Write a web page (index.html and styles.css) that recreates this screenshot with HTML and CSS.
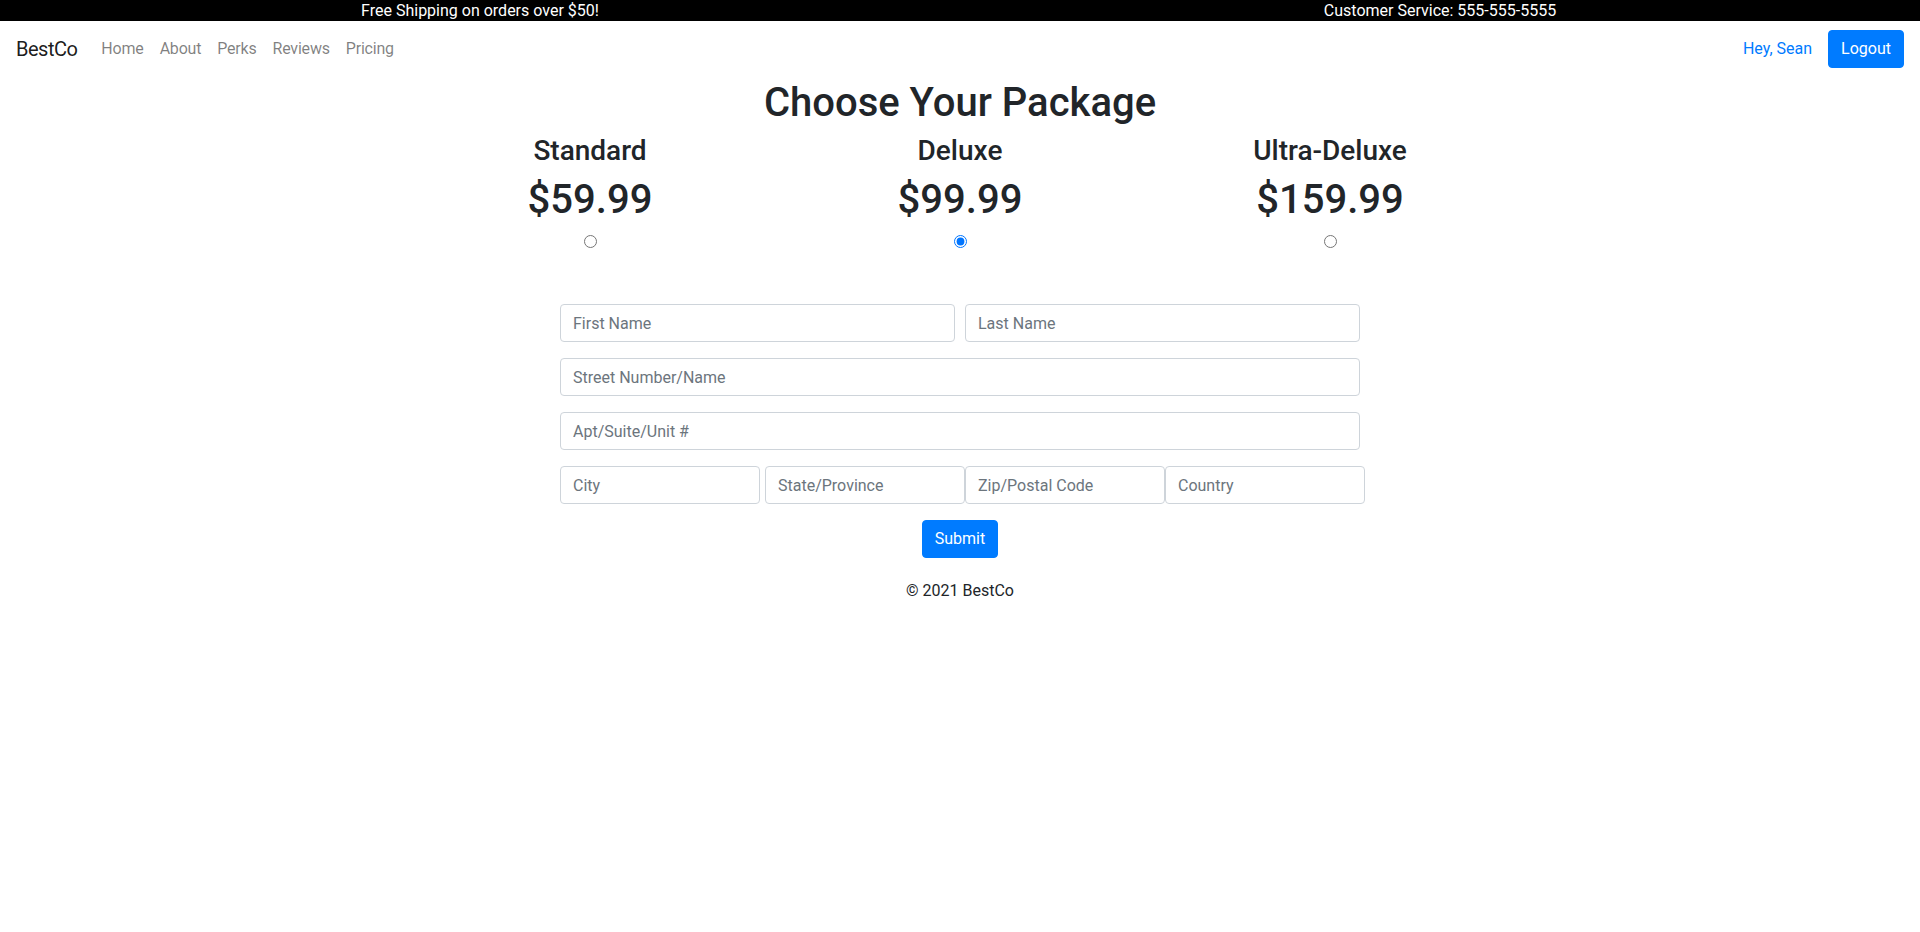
FILE: index.html
```html
<!DOCTYPE html>
<html lang="en">
<head>
<meta charset="utf-8">
<title>BestCo - Choose Your Package</title>
<link rel="stylesheet" href="styles.css">
</head>
<body>
<div class="topbar">
  <div class="topbar-item">Free Shipping on orders over $50!</div>
  <div class="topbar-item">Customer Service: 555-555-5555</div>
</div>
<nav class="navbar">
  <a class="brand" href="#">BestCo</a>
  <ul class="nav-links">
    <li><a class="nav-link" href="#">Home</a></li>
    <li><a class="nav-link" href="#">About</a></li>
    <li><a class="nav-link" href="#">Perks</a></li>
    <li><a class="nav-link" href="#">Reviews</a></li>
    <li><a class="nav-link" href="#">Pricing</a></li>
  </ul>
  <div class="nav-right">
    <a class="user-link" href="#">Hey, Sean</a>
    <button class="btn" type="button">Logout</button>
  </div>
</nav>
<main class="main">
  <h1 class="title">Choose Your Package</h1>
  <div class="packages">
    <label class="package">
      <span class="package-name">Standard</span>
      <span class="package-price">$59.99</span>
      <input class="package-radio" type="radio" name="package" value="standard">
    </label>
    <label class="package">
      <span class="package-name">Deluxe</span>
      <span class="package-price">$99.99</span>
      <input class="package-radio" type="radio" name="package" value="deluxe" checked>
    </label>
    <label class="package">
      <span class="package-name">Ultra-Deluxe</span>
      <span class="package-price">$159.99</span>
      <input class="package-radio" type="radio" name="package" value="ultra">
    </label>
  </div>
  <form class="form">
    <div class="form-row two">
      <input class="field" type="text" placeholder="First Name">
      <input class="field" type="text" placeholder="Last Name">
    </div>
    <div class="form-row">
      <input class="field" type="text" placeholder="Street Number/Name">
    </div>
    <div class="form-row">
      <input class="field" type="text" placeholder="Apt/Suite/Unit #">
    </div>
    <div class="form-row four">
      <input class="field city" type="text" placeholder="City">
      <input class="field" type="text" placeholder="State/Province">
      <input class="field" type="text" placeholder="Zip/Postal Code">
      <input class="field" type="text" placeholder="Country">
    </div>
    <div class="submit-row">
      <button class="btn" type="submit">Submit</button>
    </div>
  </form>
  <footer class="footer">© 2021 BestCo</footer>
</main>
</body>
</html>
```
FILE: styles.css
```css
* { box-sizing: border-box; }

body {
  margin: 0;
  font-family: "Segoe UI", Roboto, "Helvetica Neue", Arial, sans-serif;
  font-size: 16px;
  line-height: 1.5;
  color: #212529;
  background: #fff;
}

.topbar {
  display: flex;
  background: #000;
  color: #fff;
  font-size: 16px;
  line-height: 21px;
}
.topbar-item {
  flex: 1;
  text-align: center;
}

.navbar {
  display: flex;
  align-items: center;
  padding: 8px 16px;
}
.brand {
  font-size: 20px;
  line-height: 30px;
  padding: 5px 0;
  letter-spacing: -0.5px;
  color: rgba(0,0,0,.9);
  text-decoration: none;
  margin-right: 16px;
}
.nav-links {
  display: flex;
  list-style: none;
  margin: 0;
  padding: 0;
}
.nav-link {
  display: block;
  padding: 8px;
  letter-spacing: -0.2px;
  color: rgba(0,0,0,.5);
  text-decoration: none;
}
.nav-right {
  margin-left: auto;
  display: flex;
  align-items: center;
  gap: 8px;
}
.user-link {
  color: #007bff;
  text-decoration: none;
  padding: 8px;
}
.btn {
  font-family: inherit;
  font-size: 16px;
  line-height: 24px;
  padding: 6px 12px;
  color: #fff;
  background: #007bff;
  border: 1px solid #007bff;
  border-radius: 4px;
}

.main {
  display: flex;
  flex-direction: column;
  align-items: center;
}
.title {
  margin: 2px 0 7px;
  font-size: 40px;
  font-weight: 500;
  line-height: 48px;
}
.packages {
  width: 1110px;
  display: grid;
  grid-template-columns: repeat(3, 1fr);
}
.package {
  display: flex;
  flex-direction: column;
  align-items: center;
}
.package-name {
  font-size: 28px;
  font-weight: 500;
  line-height: 34px;
  margin-bottom: 8px;
}
.package-price {
  font-size: 40px;
  font-weight: 500;
  line-height: 48px;
}
.package-radio {
  margin: 11px 0 0;
  width: 13px;
  height: 13px;
}

.form {
  width: 800px;
  margin-top: 56px;
}
.form-row {
  display: flex;
  margin-bottom: 16px;
}
.form-row.two { gap: 10px; }
.field {
  flex: 1;
  min-width: 0;
  height: 38px;
  padding: 6px 12px;
  font-family: inherit;
  font-size: 16px;
  line-height: 24px;
  color: #495057;
  border: 1px solid #ced4da;
  border-radius: 4px;
  background: #fff;
}
.field::placeholder { color: #6c757d; }
.form-row.four { width: 805px; }
.form-row.four .field { flex: 0 0 200px; }
.form-row.four .city { margin-right: 5px; }
.submit-row {
  display: flex;
  justify-content: center;
}
.footer {
  margin-top: 21px;
  font-size: 16px;
  line-height: 24px;
  text-align: center;
}
```
